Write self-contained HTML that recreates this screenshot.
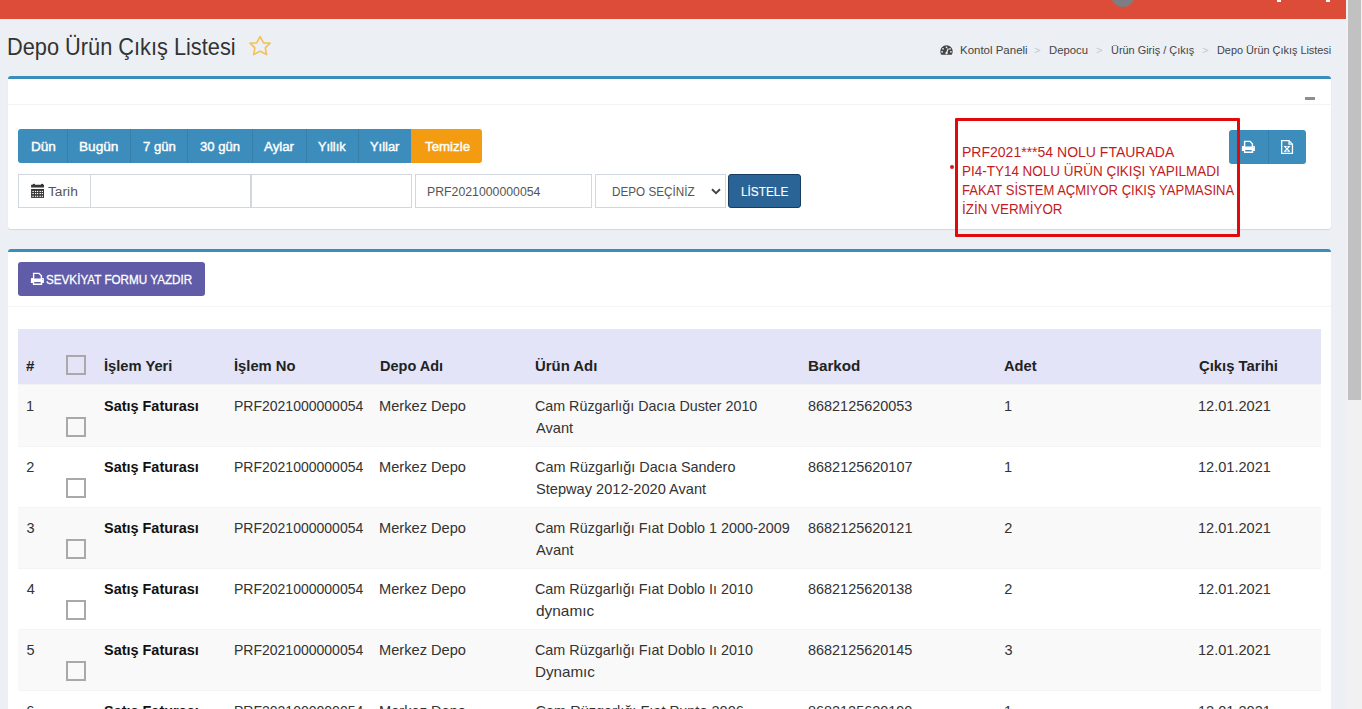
<!DOCTYPE html>
<html><head><meta charset="utf-8">
<style>
html,body{margin:0;padding:0;width:1362px;height:709px;overflow:hidden;background:#ecf0f5;font-family:"Liberation Sans",sans-serif;}
.a{position:absolute;box-sizing:border-box;}
.t{position:absolute;white-space:pre;transform-origin:0 0;font-family:"Liberation Sans",sans-serif;}
</style></head><body>
<!-- header -->
<div class="a" style="left:0;top:0;width:1346px;height:18.5px;background:#dd4b39"></div>
<div class="a" style="left:1111px;top:-17px;width:24px;height:24px;border-radius:50%;background:#7d7d83"></div>
<div class="a" style="left:1277px;top:0;width:4px;height:1.5px;background:#fff"></div>
<div class="a" style="left:1326px;top:0;width:4px;height:1.5px;background:#fff"></div>
<!-- scrollbar -->
<div class="a" style="left:1346px;top:0;width:16px;height:709px;background:#f1f1f1"></div>
<div class="a" style="left:1348px;top:0;width:13px;height:400px;background:#c1c1c1"></div>
<!-- star -->
<svg class="a" style="left:244px;top:30px" width="32" height="30" viewBox="0 0 32 30">
<path d="M16.1 6.6 L19.5 12.9 L26.1 13.1 L21.3 17.9 L22.6 24.6 L16.1 21.2 L9.6 24.6 L10.9 17.9 L6.1 13.1 L12.7 12.9 Z" fill="none" stroke="#f2c25f" stroke-width="1.7" stroke-linejoin="round"/>
</svg>
<!-- dashboard icon -->
<svg class="a" style="left:940px;top:45px" width="13" height="10" viewBox="0 0 13 10">
<path d="M6.5 0.3 A6.2 6.2 0 0 0 0.3 6.5 C0.3 7.8 0.7 8.9 1.3 9.7 L11.7 9.7 C12.3 8.9 12.7 7.8 12.7 6.5 A6.2 6.2 0 0 0 6.5 0.3 Z" fill="#444"/>
<circle cx="6.5" cy="2.3" r="0.9" fill="#ecf0f5"/><circle cx="3" cy="3.8" r="0.9" fill="#ecf0f5"/><circle cx="10" cy="3.8" r="0.9" fill="#ecf0f5"/>
<circle cx="2.1" cy="6.8" r="0.9" fill="#ecf0f5"/><circle cx="10.9" cy="6.8" r="0.9" fill="#ecf0f5"/>
<path d="M6.5 8.2 L8.2 3.5" stroke="#ecf0f5" stroke-width="1.2"/><circle cx="6.5" cy="8.1" r="1.2" fill="#ecf0f5"/>
</svg>
<svg class="a" style="left:1033.5px;top:47px" width="8" height="7" viewBox="0 0 8 7"><path d="M0.6 1.1 L6.2 3.4 L0.6 5.7" fill="none" stroke="#c4c4c4" stroke-width="0.9"/></svg>
<svg class="a" style="left:1095.5px;top:47px" width="8" height="7" viewBox="0 0 8 7"><path d="M0.6 1.1 L6.2 3.4 L0.6 5.7" fill="none" stroke="#c4c4c4" stroke-width="0.9"/></svg>
<svg class="a" style="left:1201.5px;top:47px" width="8" height="7" viewBox="0 0 8 7"><path d="M0.6 1.1 L6.2 3.4 L0.6 5.7" fill="none" stroke="#c4c4c4" stroke-width="0.9"/></svg>
<!-- box 1 -->
<div class="a" style="left:8px;top:76px;width:1323px;height:153px;background:#fff;border-top:3px solid #3c8dbc;border-radius:3px;box-shadow:0 1px 1px rgba(0,0,0,0.1)"></div>
<div class="a" style="left:8px;top:104px;width:1323px;height:1px;background:#f4f4f4"></div>
<div class="a" style="left:1305px;top:97px;width:10px;height:3px;background:#8c8f98"></div>
<!-- btn group -->
<div class="a" style="left:18px;top:129px;width:392.5px;height:34px;background:#3c8dbc;border-radius:3px 0 0 3px"></div>
<div class="a" style="left:410.5px;top:129px;width:71.5px;height:34px;background:#f39c12;border-radius:0 3px 3px 0"></div>
<div class="a" style="left:67px;top:129px;width:1px;height:34px;background:#367fa9"></div>
<div class="a" style="left:130px;top:129px;width:1px;height:34px;background:#367fa9"></div>
<div class="a" style="left:187px;top:129px;width:1px;height:34px;background:#367fa9"></div>
<div class="a" style="left:252px;top:129px;width:1px;height:34px;background:#367fa9"></div>
<div class="a" style="left:306px;top:129px;width:1px;height:34px;background:#367fa9"></div>
<div class="a" style="left:358px;top:129px;width:1px;height:34px;background:#367fa9"></div>
<!-- input group -->
<div class="a" style="left:18px;top:174px;width:73px;height:34px;border:1px solid #d2d6de;background:#fff"></div>
<div class="a" style="left:90px;top:174px;width:161px;height:34px;border:1px solid #d2d6de;background:#fff"></div>
<div class="a" style="left:251px;top:174px;width:161px;height:34px;border:1px solid #d2d6de;background:#fff"></div>
<div class="a" style="left:415px;top:174px;width:177px;height:34px;border:1px solid #d2d6de;background:#fff"></div>
<div class="a" style="left:595px;top:174px;width:131px;height:34px;border:1px solid #d2d6de;background:#fff"></div>
<svg class="a" style="left:710px;top:187px" width="12" height="9" viewBox="0 0 12 9"><path d="M2 2.3 L6 6.2 L10 2.3" fill="none" stroke="#444" stroke-width="1.9"/></svg>
<div class="a" style="left:728px;top:174px;width:72.5px;height:34px;background:#2a6395;border:1px solid #173d60;border-radius:3px"></div>
<!-- calendar icon -->
<svg class="a" style="left:26px;top:180px" width="22" height="22" viewBox="0 0 22 22">
<path fill="#353535" d="M5.1 4.7 H6.6 Q6.7 3.8 7.8 3.8 Q9 3.8 9.1 4.7 H14.8 Q14.9 3.8 16 3.8 Q17.2 3.8 17.3 4.7 H18 V7.6 H5.1 Z"/>
<rect x="5.1" y="9" width="12.9" height="8.9" fill="#353535"/>
<g fill="#fff"><rect x="6.4" y="10.9" width="1.4" height="1.15"/><rect x="9.0" y="10.9" width="1.2" height="1.15"/><rect x="11.0" y="10.9" width="1.2" height="1.15"/><rect x="13.5" y="10.9" width="1.4" height="1.15"/><rect x="15.8" y="10.9" width="1.2" height="1.15"/><rect x="6.4" y="13.0" width="1.4" height="1.15"/><rect x="9.0" y="13.0" width="1.2" height="1.15"/><rect x="11.0" y="13.0" width="1.2" height="1.15"/><rect x="13.5" y="13.0" width="1.4" height="1.15"/><rect x="15.8" y="13.0" width="1.2" height="1.15"/><rect x="6.4" y="15.7" width="1.4" height="1.15"/><rect x="9.0" y="15.7" width="1.2" height="1.15"/><rect x="11.0" y="15.7" width="1.2" height="1.15"/><rect x="13.5" y="15.7" width="1.4" height="1.15"/><rect x="15.8" y="15.7" width="1.2" height="1.15"/></g>
</svg>
<!-- print / excel -->
<div class="a" style="left:1229px;top:130px;width:77px;height:34px;background:#3c8dbc;border-radius:3px"></div>
<div class="a" style="left:1268px;top:130px;width:1px;height:34px;background:#367fa9"></div>
<svg class="a" style="left:1238px;top:136px" width="22" height="22" viewBox="0 0 22 22">
<path fill-rule="evenodd" fill="#fff" d="M5.9 4.7 H12.3 L15.1 7.5 V10 H16.1 Q16.9 10 16.9 10.8 V14.9 H15.2 V16.9 H5.9 V14.9 H3.9 V10.8 Q3.9 10 4.7 10 H5.9 Z M7.3 6.1 H11.7 L13.7 8.1 V10.6 H7.3 Z M7.2 14.1 H13.7 V15.5 H7.2 Z"/>
<circle cx="15.3" cy="11.4" r="0.45" fill="#3c8dbc"/>
</svg>
<svg class="a" style="left:1276px;top:136px" width="22" height="22" viewBox="0 0 22 22">
<path fill-rule="evenodd" fill="#fff" d="M5 4 H13.2 L17.1 7.9 V18 H5 Z M6.3 5.3 H12.4 V8.7 H15.8 V16.7 H6.3 Z M13.7 5.9 L15.2 7.4 H13.7 Z"/>
<path fill="#fff" d="M7.9 9.9 H10.6 V11 H10.1 L11 12.2 L11.9 11 H11.4 V9.9 H14.1 V11 H13.5 L11.9 12.9 L13.6 14.7 H14.1 V15.8 H11.4 V14.7 H11.9 L11 13.6 L10.1 14.7 H10.6 V15.8 H7.9 V14.7 H8.4 L10.1 12.9 L8.5 11 H7.9 Z"/>
</svg>
<!-- red note -->
<div class="a" style="left:955px;top:118px;width:285px;height:119px;border:3px solid #e00a0a;border-radius:1px"></div>
<div class="a" style="left:950px;top:164.5px;width:4px;height:4px;border-radius:50%;background:#e0141e"></div>
<!-- box 2 -->
<div class="a" style="left:8px;top:249px;width:1323px;height:470px;background:#fff;border-top:3px solid #3c8dbc;border-radius:3px"></div>
<div class="a" style="left:8px;top:306px;width:1323px;height:1px;background:#f4f4f4"></div>
<div class="a" style="left:18px;top:262px;width:187px;height:34px;background:#605ca8;border-radius:3px"></div>
<svg class="a" style="left:27px;top:268px" width="22" height="22" viewBox="0 0 22 22">
<path fill-rule="evenodd" fill="#fff" d="M5.9 4.7 H12.3 L15.1 7.5 V10 H16.1 Q16.9 10 16.9 10.8 V14.9 H15.2 V16.9 H5.9 V14.9 H3.9 V10.8 Q3.9 10 4.7 10 H5.9 Z M7.3 6.1 H11.7 L13.7 8.1 V10.6 H7.3 Z M7.2 14.1 H13.7 V15.5 H7.2 Z"/>
<circle cx="15.3" cy="11.4" r="0.45" fill="#605ca8"/>
</svg>
<!-- table -->
<div class="a" style="left:18px;top:329px;width:1303px;height:55px;background:#e4e4f8"></div>
<div class="a" style="left:18px;top:384px;width:1303px;height:62px;background:#f9f9f9;border-top:1px solid #f2f2f4"></div>
<div class="a" style="left:18px;top:446px;width:1303px;height:61px;background:#fff;border-top:1px solid #f4f4f4"></div>
<div class="a" style="left:18px;top:507px;width:1303px;height:61px;background:#f9f9f9;border-top:1px solid #f4f4f4"></div>
<div class="a" style="left:18px;top:568px;width:1303px;height:61px;background:#fff;border-top:1px solid #f4f4f4"></div>
<div class="a" style="left:18px;top:629px;width:1303px;height:61px;background:#f9f9f9;border-top:1px solid #f4f4f4"></div>
<div class="a" style="left:18px;top:690px;width:1303px;height:30px;background:#fff;border-top:1px solid #f4f4f4"></div>
<!-- checkboxes -->
<div class="a" style="left:66px;top:355px;width:20px;height:20px;border:2px solid #a9a9a9"></div>
<div class="a" style="left:66px;top:417.00px;width:20px;height:20px;border:2px solid #a9a9a9"></div>
<div class="a" style="left:66px;top:478.00px;width:20px;height:20px;border:2px solid #a9a9a9"></div>
<div class="a" style="left:66px;top:539.00px;width:20px;height:20px;border:2px solid #a9a9a9"></div>
<div class="a" style="left:66px;top:600.00px;width:20px;height:20px;border:2px solid #a9a9a9"></div>
<div class="a" style="left:66px;top:661.00px;width:20px;height:20px;border:2px solid #a9a9a9"></div>
<div class="a" style="left:66px;top:722.00px;width:20px;height:20px;border:2px solid #a9a9a9"></div>

<span class="t" style="left:7.46px;top:35.70px;font-size:23.26px;line-height:23.26px;font-weight:400;color:#333;transform:scaleX(0.9361)">Depo Ürün Çıkış Listesi</span>
<span class="t" style="left:959.56px;top:44.00px;font-size:11.63px;line-height:11.63px;font-weight:400;color:#444;transform:scaleX(0.9869)">Kontol Paneli</span>
<span class="t" style="left:1049.37px;top:44.00px;font-size:11.63px;line-height:11.63px;font-weight:400;color:#444;transform:scaleX(0.9726)">Depocu</span>
<span class="t" style="left:1111.16px;top:44.00px;font-size:11.63px;line-height:11.63px;font-weight:400;color:#444;transform:scaleX(0.9394)">Ürün Giriş / Çıkış</span>
<span class="t" style="left:1216.81px;top:44.00px;font-size:11.63px;line-height:11.63px;font-weight:400;color:#444;transform:scaleX(0.9354)">Depo Ürün Çıkış Listesi</span>
<span class="t" style="left:30.59px;top:140.10px;font-size:13.08px;line-height:13.08px;font-weight:400;color:#fff;-webkit-text-stroke:0.40px #fff;transform:scaleX(1.0373)">Dün</span>
<span class="t" style="left:79.48px;top:140.10px;font-size:13.08px;line-height:13.08px;font-weight:400;color:#fff;-webkit-text-stroke:0.40px #fff;transform:scaleX(1.0416)">Bugün</span>
<span class="t" style="left:142.93px;top:140.10px;font-size:13.08px;line-height:13.08px;font-weight:400;color:#fff;-webkit-text-stroke:0.40px #fff;transform:scaleX(1.0059)">7 gün</span>
<span class="t" style="left:199.90px;top:140.10px;font-size:13.08px;line-height:13.08px;font-weight:400;color:#fff;-webkit-text-stroke:0.40px #fff;transform:scaleX(1.0008)">30 gün</span>
<span class="t" style="left:263.97px;top:140.10px;font-size:13.08px;line-height:13.08px;font-weight:400;color:#fff;-webkit-text-stroke:0.40px #fff;transform:scaleX(1.0164)">Aylar</span>
<span class="t" style="left:318.42px;top:140.10px;font-size:13.08px;line-height:13.08px;font-weight:400;color:#fff;-webkit-text-stroke:0.40px #fff;transform:scaleX(0.9724)">Yıllık</span>
<span class="t" style="left:370.32px;top:140.10px;font-size:13.08px;line-height:13.08px;font-weight:400;color:#fff;-webkit-text-stroke:0.40px #fff;transform:scaleX(0.9866)">Yıllar</span>
<span class="t" style="left:424.80px;top:140.10px;font-size:13.08px;line-height:13.08px;font-weight:400;color:#fff;-webkit-text-stroke:0.40px #fff;transform:scaleX(1.0168)">Temizle</span>
<span class="t" style="left:48.39px;top:185.40px;font-size:13.66px;line-height:13.66px;font-weight:400;color:#555;transform:scaleX(1.0065)">Tarih</span>
<span class="t" style="left:427.49px;top:185.20px;font-size:13.37px;line-height:13.37px;font-weight:400;color:#555;transform:scaleX(0.9194)">PRF2021000000054</span>
<span class="t" style="left:611.74px;top:185.20px;font-size:13.37px;line-height:13.37px;font-weight:400;color:#555;transform:scaleX(0.8764)">DEPO SEÇİNİZ</span>
<span class="t" style="left:741.13px;top:185.20px;font-size:13.37px;line-height:13.37px;font-weight:400;color:#fff;-webkit-text-stroke:0.15px #fff;transform:scaleX(0.8842)">LİSTELE</span>
<span class="t" style="left:962.05px;top:145.70px;font-size:13.95px;line-height:13.95px;font-weight:400;color:#c41b22;transform:scaleX(1.0051)">PRF2021***54 NOLU FTAURADA</span>
<span class="t" style="left:962.09px;top:164.70px;font-size:13.95px;line-height:13.95px;font-weight:400;color:#c41b22;transform:scaleX(0.9661)">PI4-TY14 NOLU ÜRÜN ÇIKIŞI YAPILMADI</span>
<span class="t" style="left:962.13px;top:183.80px;font-size:13.95px;line-height:13.95px;font-weight:400;color:#c41b22;transform:scaleX(0.9355)">FAKAT SİSTEM AÇMIYOR ÇIKIŞ YAPMASINA</span>
<span class="t" style="left:961.96px;top:202.80px;font-size:13.95px;line-height:13.95px;font-weight:400;color:#c41b22;transform:scaleX(0.9619)">İZİN VERMİYOR</span>
<span class="t" style="left:46.47px;top:272.80px;font-size:13.37px;line-height:13.37px;font-weight:400;color:#fff;-webkit-text-stroke:0.30px #fff;transform:scaleX(0.8739)">SEVKİYAT FORMU YAZDIR</span>
<span class="t" style="left:26.04px;top:357.90px;font-size:15.41px;line-height:15.41px;font-weight:700;color:#222;transform:scaleX(0.9794)">#</span>
<span class="t" style="left:104.02px;top:357.90px;font-size:15.41px;line-height:15.41px;font-weight:700;color:#222;transform:scaleX(0.9547)">İşlem Yeri</span>
<span class="t" style="left:233.91px;top:357.90px;font-size:15.41px;line-height:15.41px;font-weight:700;color:#222;transform:scaleX(0.9571)">İşlem No</span>
<span class="t" style="left:379.63px;top:357.90px;font-size:15.41px;line-height:15.41px;font-weight:700;color:#222;transform:scaleX(0.9409)">Depo Adı</span>
<span class="t" style="left:535.31px;top:357.90px;font-size:15.41px;line-height:15.41px;font-weight:700;color:#222;transform:scaleX(0.9669)">Ürün Adı</span>
<span class="t" style="left:808.08px;top:357.90px;font-size:15.41px;line-height:15.41px;font-weight:700;color:#222;transform:scaleX(0.9873)">Barkod</span>
<span class="t" style="left:1003.83px;top:357.90px;font-size:15.41px;line-height:15.41px;font-weight:700;color:#222;transform:scaleX(0.9531)">Adet</span>
<span class="t" style="left:1198.69px;top:357.90px;font-size:15.41px;line-height:15.41px;font-weight:700;color:#222;transform:scaleX(0.9640)">Çıkış Tarihi</span>
<span class="t" style="left:25.89px;top:399.00px;font-size:14.54px;line-height:14.54px;font-weight:400;color:#333;transform:scaleX(1.0000)">1</span>
<span class="t" style="left:104.48px;top:399.00px;font-size:14.54px;line-height:14.54px;font-weight:700;color:#111;transform:scaleX(0.9938)">Satış Faturası</span>
<span class="t" style="left:233.75px;top:399.00px;font-size:14.54px;line-height:14.54px;font-weight:400;color:#333;transform:scaleX(0.9637)">PRF2021000000054</span>
<span class="t" style="left:379.40px;top:399.00px;font-size:14.54px;line-height:14.54px;font-weight:400;color:#333;transform:scaleX(1.0069)">Merkez Depo</span>
<span class="t" style="left:535.47px;top:399.00px;font-size:14.54px;line-height:14.54px;font-weight:400;color:#333;transform:scaleX(0.9829)">Cam Rüzgarlığı Dacıa Duster 2010</span>
<span class="t" style="left:536.17px;top:420.80px;font-size:14.54px;line-height:14.54px;font-weight:400;color:#333;transform:scaleX(1.0062)">Avant</span>
<span class="t" style="left:808.47px;top:399.00px;font-size:14.54px;line-height:14.54px;font-weight:400;color:#333;transform:scaleX(0.9933)">8682125620053</span>
<span class="t" style="left:1003.89px;top:399.00px;font-size:14.54px;line-height:14.54px;font-weight:400;color:#333;transform:scaleX(1.0000)">1</span>
<span class="t" style="left:1198.09px;top:399.00px;font-size:14.54px;line-height:14.54px;font-weight:400;color:#333;transform:scaleX(1.0026)">12.01.2021</span>
<span class="t" style="left:26.27px;top:460.00px;font-size:14.54px;line-height:14.54px;font-weight:400;color:#333;transform:scaleX(1.0000)">2</span>
<span class="t" style="left:104.48px;top:460.00px;font-size:14.54px;line-height:14.54px;font-weight:700;color:#111;transform:scaleX(0.9938)">Satış Faturası</span>
<span class="t" style="left:233.75px;top:460.00px;font-size:14.54px;line-height:14.54px;font-weight:400;color:#333;transform:scaleX(0.9637)">PRF2021000000054</span>
<span class="t" style="left:379.40px;top:460.00px;font-size:14.54px;line-height:14.54px;font-weight:400;color:#333;transform:scaleX(1.0069)">Merkez Depo</span>
<span class="t" style="left:535.47px;top:460.00px;font-size:14.54px;line-height:14.54px;font-weight:400;color:#333;transform:scaleX(0.9927)">Cam Rüzgarlığı Dacıa Sandero</span>
<span class="t" style="left:535.54px;top:481.80px;font-size:14.54px;line-height:14.54px;font-weight:400;color:#333;transform:scaleX(1.0045)">Stepway 2012-2020 Avant</span>
<span class="t" style="left:808.47px;top:460.00px;font-size:14.54px;line-height:14.54px;font-weight:400;color:#333;transform:scaleX(0.9942)">8682125620107</span>
<span class="t" style="left:1003.89px;top:460.00px;font-size:14.54px;line-height:14.54px;font-weight:400;color:#333;transform:scaleX(1.0000)">1</span>
<span class="t" style="left:1198.09px;top:460.00px;font-size:14.54px;line-height:14.54px;font-weight:400;color:#333;transform:scaleX(1.0026)">12.01.2021</span>
<span class="t" style="left:26.45px;top:521.00px;font-size:14.54px;line-height:14.54px;font-weight:400;color:#333;transform:scaleX(1.0000)">3</span>
<span class="t" style="left:104.48px;top:521.00px;font-size:14.54px;line-height:14.54px;font-weight:700;color:#111;transform:scaleX(0.9938)">Satış Faturası</span>
<span class="t" style="left:233.75px;top:521.00px;font-size:14.54px;line-height:14.54px;font-weight:400;color:#333;transform:scaleX(0.9637)">PRF2021000000054</span>
<span class="t" style="left:379.40px;top:521.00px;font-size:14.54px;line-height:14.54px;font-weight:400;color:#333;transform:scaleX(1.0069)">Merkez Depo</span>
<span class="t" style="left:535.47px;top:521.00px;font-size:14.54px;line-height:14.54px;font-weight:400;color:#333;transform:scaleX(0.9889)">Cam Rüzgarlığı Fıat Doblo 1 2000-2009</span>
<span class="t" style="left:536.17px;top:542.80px;font-size:14.54px;line-height:14.54px;font-weight:400;color:#333;transform:scaleX(1.0198)">Avant</span>
<span class="t" style="left:808.47px;top:521.00px;font-size:14.54px;line-height:14.54px;font-weight:400;color:#333;transform:scaleX(0.9940)">8682125620121</span>
<span class="t" style="left:1004.27px;top:521.00px;font-size:14.54px;line-height:14.54px;font-weight:400;color:#333;transform:scaleX(1.0000)">2</span>
<span class="t" style="left:1198.09px;top:521.00px;font-size:14.54px;line-height:14.54px;font-weight:400;color:#333;transform:scaleX(1.0026)">12.01.2021</span>
<span class="t" style="left:26.67px;top:582.00px;font-size:14.54px;line-height:14.54px;font-weight:400;color:#333;transform:scaleX(1.0000)">4</span>
<span class="t" style="left:104.48px;top:582.00px;font-size:14.54px;line-height:14.54px;font-weight:700;color:#111;transform:scaleX(0.9938)">Satış Faturası</span>
<span class="t" style="left:233.75px;top:582.00px;font-size:14.54px;line-height:14.54px;font-weight:400;color:#333;transform:scaleX(0.9637)">PRF2021000000054</span>
<span class="t" style="left:379.40px;top:582.00px;font-size:14.54px;line-height:14.54px;font-weight:400;color:#333;transform:scaleX(1.0069)">Merkez Depo</span>
<span class="t" style="left:535.47px;top:582.00px;font-size:14.54px;line-height:14.54px;font-weight:400;color:#333;transform:scaleX(0.9886)">Cam Rüzgarlığı Fıat Doblo Iı 2010</span>
<span class="t" style="left:535.55px;top:603.80px;font-size:14.54px;line-height:14.54px;font-weight:400;color:#333;transform:scaleX(1.0607)">dynamıc</span>
<span class="t" style="left:808.47px;top:582.00px;font-size:14.54px;line-height:14.54px;font-weight:400;color:#333;transform:scaleX(0.9933)">8682125620138</span>
<span class="t" style="left:1004.27px;top:582.00px;font-size:14.54px;line-height:14.54px;font-weight:400;color:#333;transform:scaleX(1.0000)">2</span>
<span class="t" style="left:1198.09px;top:582.00px;font-size:14.54px;line-height:14.54px;font-weight:400;color:#333;transform:scaleX(1.0026)">12.01.2021</span>
<span class="t" style="left:26.42px;top:643.00px;font-size:14.54px;line-height:14.54px;font-weight:400;color:#333;transform:scaleX(1.0000)">5</span>
<span class="t" style="left:104.48px;top:643.00px;font-size:14.54px;line-height:14.54px;font-weight:700;color:#111;transform:scaleX(0.9938)">Satış Faturası</span>
<span class="t" style="left:233.75px;top:643.00px;font-size:14.54px;line-height:14.54px;font-weight:400;color:#333;transform:scaleX(0.9637)">PRF2021000000054</span>
<span class="t" style="left:379.40px;top:643.00px;font-size:14.54px;line-height:14.54px;font-weight:400;color:#333;transform:scaleX(1.0069)">Merkez Depo</span>
<span class="t" style="left:535.47px;top:643.00px;font-size:14.54px;line-height:14.54px;font-weight:400;color:#333;transform:scaleX(0.9886)">Cam Rüzgarlığı Fıat Doblo Iı 2010</span>
<span class="t" style="left:534.95px;top:664.80px;font-size:14.54px;line-height:14.54px;font-weight:400;color:#333;transform:scaleX(1.0454)">Dynamıc</span>
<span class="t" style="left:808.47px;top:643.00px;font-size:14.54px;line-height:14.54px;font-weight:400;color:#333;transform:scaleX(0.9931)">8682125620145</span>
<span class="t" style="left:1004.45px;top:643.00px;font-size:14.54px;line-height:14.54px;font-weight:400;color:#333;transform:scaleX(1.0000)">3</span>
<span class="t" style="left:1198.09px;top:643.00px;font-size:14.54px;line-height:14.54px;font-weight:400;color:#333;transform:scaleX(1.0026)">12.01.2021</span>
<span class="t" style="left:26.26px;top:704.00px;font-size:14.54px;line-height:14.54px;font-weight:400;color:#333;transform:scaleX(1.0000)">6</span>
<span class="t" style="left:104.48px;top:704.00px;font-size:14.54px;line-height:14.54px;font-weight:700;color:#111;transform:scaleX(0.9938)">Satış Faturası</span>
<span class="t" style="left:233.75px;top:704.00px;font-size:14.54px;line-height:14.54px;font-weight:400;color:#333;transform:scaleX(0.9637)">PRF2021000000054</span>
<span class="t" style="left:379.40px;top:704.00px;font-size:14.54px;line-height:14.54px;font-weight:400;color:#333;transform:scaleX(1.0069)">Merkez Depo</span>
<span class="t" style="left:535.46px;top:704.00px;font-size:14.54px;line-height:14.54px;font-weight:400;color:#333;transform:scaleX(1.0000)">Cam Rüzgarlığı Fıat Punto 2006</span>
<span class="t" style="left:808.47px;top:704.00px;font-size:14.54px;line-height:14.54px;font-weight:400;color:#333;transform:scaleX(0.9927)">8682125620190</span>
<span class="t" style="left:1003.89px;top:704.00px;font-size:14.54px;line-height:14.54px;font-weight:400;color:#333;transform:scaleX(1.0000)">1</span>
<span class="t" style="left:1198.09px;top:704.00px;font-size:14.54px;line-height:14.54px;font-weight:400;color:#333;transform:scaleX(1.0026)">12.01.2021</span>
</body></html>
